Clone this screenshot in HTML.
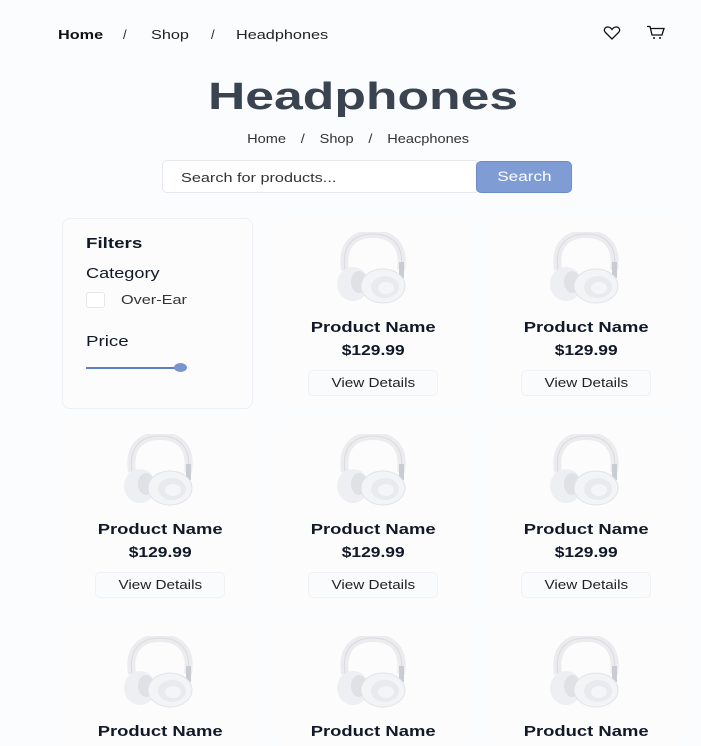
<!DOCTYPE html>
<html><head><meta charset="utf-8"><style>
*{margin:0;padding:0;box-sizing:border-box}
html,body{width:701px;height:746px;overflow:hidden}
body{background:#fbfcfd;font-family:"Liberation Sans",sans-serif;color:#111827;position:relative}
.a{position:absolute}
.s{display:inline-block;transform:scaleX(1.25);transform-origin:left center;white-space:nowrap}
.c{display:inline-block;transform:scaleX(1.27);transform-origin:center center;white-space:nowrap}
.nav{top:27px;font-size:13px;color:#222}
.card{position:absolute;width:196px;height:190px;background:#fcfcfd;border-radius:8px;text-align:center;overflow:hidden}
.card svg{position:absolute;left:60px;top:14px}
.nm{position:absolute;top:102px;width:100%;font-weight:bold;font-size:14.5px}
.pr{position:absolute;top:125px;width:100%;font-weight:bold;font-size:14.5px}
.bt{position:absolute;top:152px;left:33px;width:130px;height:26px;border:1px solid #f0f1f4;border-radius:5px;background:#fafbfc;font-size:12.5px;line-height:24px;color:#222}
</style></head><body>
<div class="a nav" style="left:58px;font-weight:bold;color:#111"><span class="s">Home</span></div>
<div class="a nav" style="left:123px">/</div>
<div class="a nav" style="left:151px"><span class="s">Shop</span></div>
<div class="a nav" style="left:211px">/</div>
<div class="a nav" style="left:236px"><span class="s">Headphones</span></div>
<svg class="a" style="left:603px;top:26px" width="18" height="14" viewBox="0 0 18 14"><path d="M9 13 L2.5 6.5 C0 4 2 0.8 5 1 C7 1.1 8.3 2.5 9 3.5 C9.7 2.5 11 1.1 13 1 C16 0.8 18 4 15.5 6.5 Z" fill="none" stroke="#111" stroke-width="1.3"/></svg>
<svg class="a" style="left:646px;top:25px" width="20" height="16" viewBox="0 0 20 16"><path d="M1 1.5 H4 L6 10 H16 L18 3.5 H5" fill="none" stroke="#111" stroke-width="1.3"/><circle cx="8" cy="13" r="1" fill="#111"/><circle cx="14" cy="13" r="1" fill="#111"/></svg>
<div class="a" style="left:0;width:727px;top:76px;text-align:center;font-size:38px;font-weight:bold;color:#3a4450"><span class="c" style="transform:scaleX(1.36)">Headphones</span></div>
<div class="a" style="left:0;width:717px;top:131px;text-align:center;font-size:13px;color:#333;word-spacing:3px"><span class="c" style="transform:scaleX(1.12)">Home &nbsp;/&nbsp; Shop &nbsp;/&nbsp; Heacphones</span></div>
<div class="a" style="left:162px;top:160px;width:315px;height:33px;background:#fff;border:1px solid #e6e9ee;border-radius:5px 0 0 5px;font-size:13px;color:#333;padding:9px 0 0 18px"><span class="s">Search for products...</span></div>
<div class="a" style="left:476px;top:161px;width:96px;height:32px;background:#7f9dd4;border:1px solid #6c8cc8;border-radius:5px;color:#fff;font-size:13.5px;text-align:center;line-height:30px"><span class="c">Search</span></div>
<div class="a" style="left:62px;top:218px;width:191px;height:191px;background:#fcfcfd;border:1px solid #eef0f3;border-radius:8px">
<div class="a" style="left:23px;top:16px;font-weight:bold;font-size:15px"><span class="s">Filters</span></div>
<div class="a" style="left:23px;top:47px;font-size:14.5px"><span class="s">Category</span></div>
<div class="a" style="left:23px;top:73px;width:19px;height:16px;border:1px solid #e5e7eb;border-radius:3px;background:#fff"></div>
<div class="a" style="left:58px;top:73px;font-size:13px;color:#333"><span class="s">Over-Ear</span></div>
<div class="a" style="left:23px;top:114px;font-size:15px"><span class="s">Price</span></div>
<div class="a" style="left:23px;top:148px;width:94px;height:2px;background:#5b7fc3"></div>
<div class="a" style="left:111px;top:144px;width:13px;height:9px;background:#7a95cc;border-radius:50%"></div>
</div>
<div id="g"></div>
<script>
var hp='<svg width="76" height="72" viewBox="0 0 76 72"><path d="M10 38 C6 12 20 2 38 2 C56 2 70 12 66 38" fill="none" stroke="#ececef" stroke-width="8"/><path d="M10 38 C6 12 20 2 38 2 C56 2 70 12 66 38" fill="none" stroke="#d9dbe0" stroke-width="1"/><rect x="64" y="30" width="5" height="16" fill="#c9ccd3"/><ellipse cx="18" cy="52" rx="16" ry="17" fill="#eeeff2"/><ellipse cx="24" cy="50" rx="8" ry="11" fill="#dfe1e5"/><ellipse cx="48" cy="54" rx="22" ry="17" fill="#f3f4f6" stroke="#e1e3e7"/><ellipse cx="50" cy="55" rx="14" ry="11" fill="#e9eaed"/><ellipse cx="51" cy="56" rx="8" ry="6" fill="#f4f5f7"/></svg>';
var cols=[62,275,488],h='';
for(var r=0;r<3;r++)for(var c=0;c<3;c++){if(r==0&&c==0)continue;
var t=218+r*202;
h+='<div class="card" style="left:'+cols[c]+'px;top:'+t+'px;height:'+Math.min(190,746-t)+'px">'+hp+'<div class="nm"><span class="c">Product Name</span></div><div class="pr"><span class="c" style="transform:scaleX(1.2)">$129.99</span></div><div class="bt"><span class="c" style="transform:scaleX(1.22)">View Details</span></div></div>';}
document.getElementById('g').innerHTML=h;
</script>
</body></html>
